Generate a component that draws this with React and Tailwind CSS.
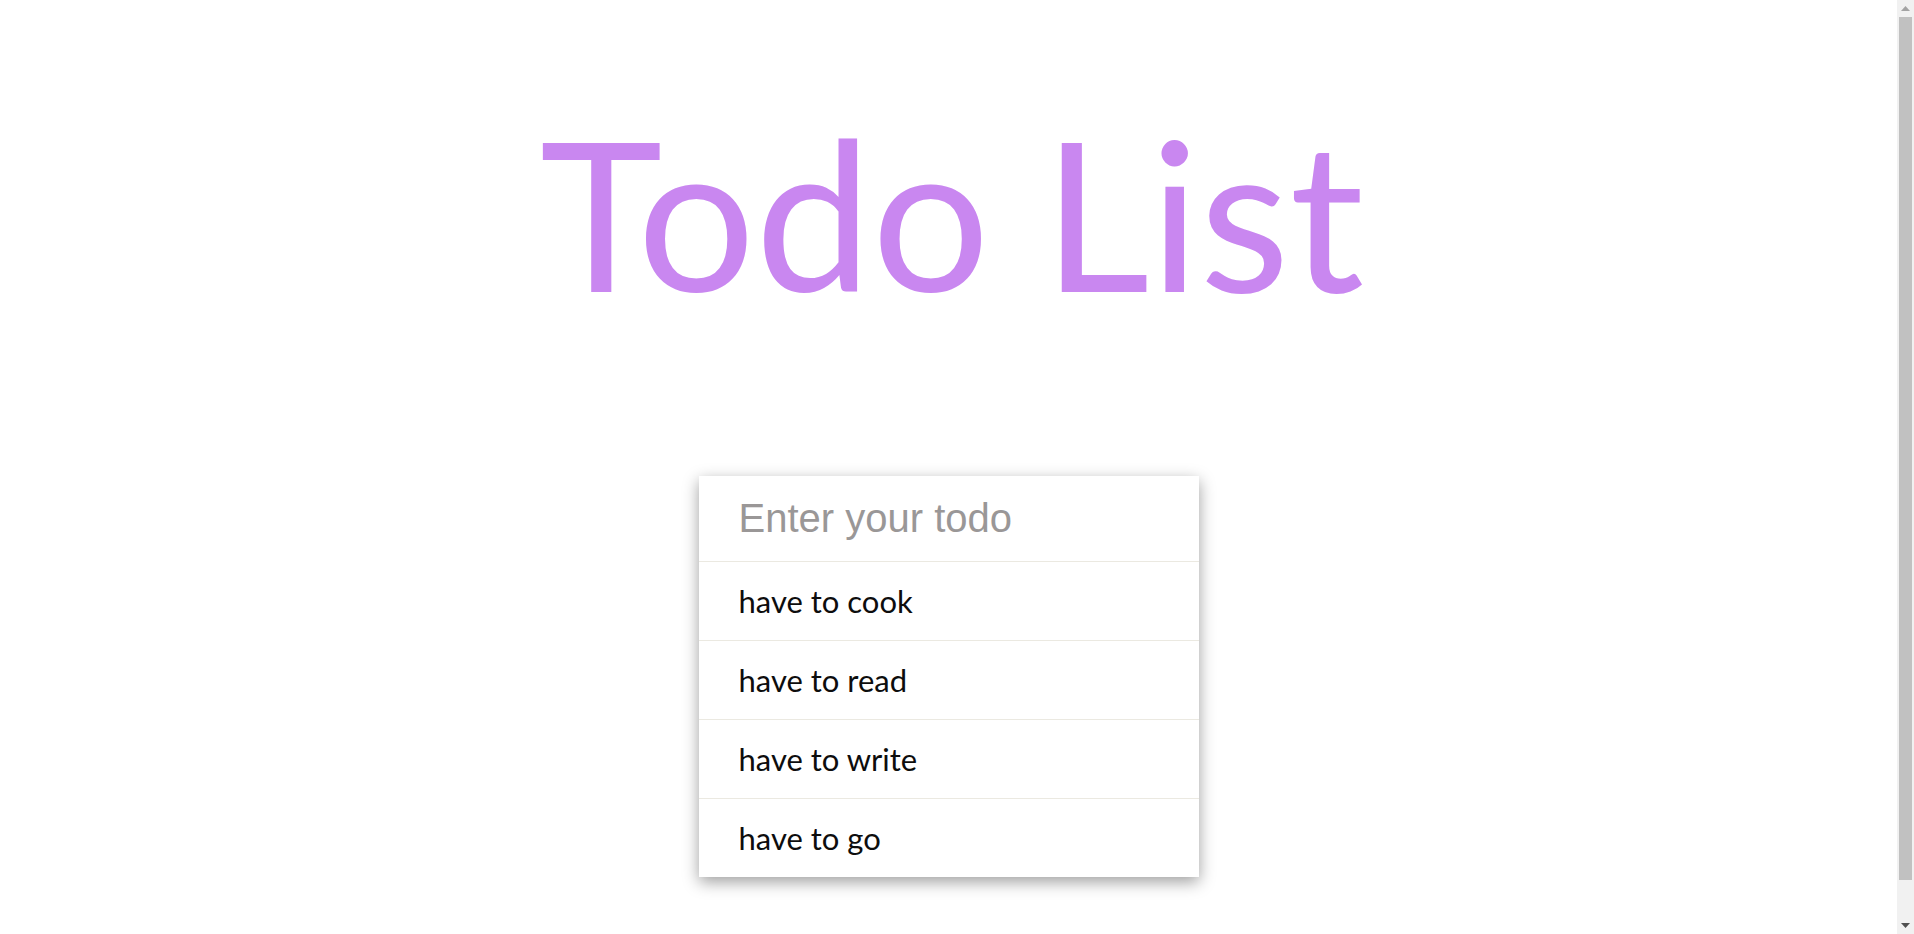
import React, { useState } from 'react';

const todos = ['have to cook', 'have to read', 'have to write', 'have to go'];

const Scrollbar = () => (
  <div className="flex h-full w-[17px] shrink-0 flex-col bg-[#f1f1f1]">
    <div className="flex h-[17px] items-center justify-center">
      <svg width="9" height="5" viewBox="0 0 9 5">
        <path d="M0 5 L4.5 0 L9 5 Z" fill="#a3a3a3" />
      </svg>
    </div>
    <div className="mx-[2px] h-[863px] bg-[#c1c1c1]" />
    <div className="flex-1" />
    <div className="flex h-[17px] items-center justify-center">
      <svg width="9" height="5" viewBox="0 0 9 5">
        <path d="M0 0 L4.5 5 L9 0 Z" fill="#505050" />
      </svg>
    </div>
  </div>
);

const App = () => {
  const [value, setValue] = useState('');

  return (
    <div className="flex h-[934px] overflow-hidden bg-white">
      <main className="flex flex-1 flex-col items-center pb-[98px] [font-family:Lato,sans-serif]">
        <h1 className="mt-[108px] pl-[7px] text-[208px] leading-none font-normal text-[#c987f0]">
          Todo List
        </h1>

        <div className="mt-[160px] w-[500px] bg-white shadow-[0_5px_15px_rgba(0,0,0,0.38)]">
          <input
            type="text"
            value={value}
            onChange={(e) => setValue(e.target.value)}
            placeholder="Enter your todo"
            className="block h-[85px] w-full pl-[40px] pr-6 text-[40px] text-[#333] outline-none placeholder:text-[#9a9797] [font-family:'Liberation_Sans',Arial,sans-serif]"
          />
          <ul>
            {todos.map((todo) => (
              <li
                key={todo}
                className="flex h-[79px] items-center border-t border-[#ebe9e1] pl-[40px] text-[31px] text-[#0d0d0d]"
              >
                {todo}
              </li>
            ))}
          </ul>
        </div>
      </main>
      <Scrollbar />
    </div>
  );
};

export default App;
